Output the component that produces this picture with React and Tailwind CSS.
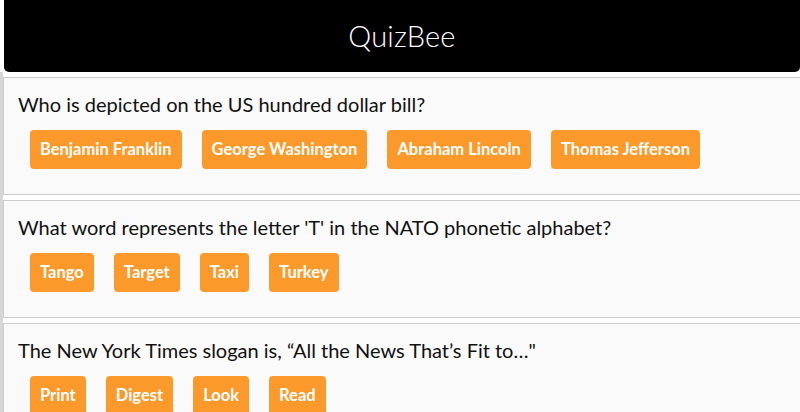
import React from 'react';

const questions = [
  {
    q: 'Who is depicted on the US hundred dollar bill?',
    answers: ['Benjamin Franklin', 'George Washington', 'Abraham Lincoln', 'Thomas Jefferson'],
  },
  {
    q: "What word represents the letter 'T' in the NATO phonetic alphabet?",
    answers: ['Tango', 'Target', 'Taxi', 'Turkey'],
  },
  {
    q: 'The New York Times slogan is, \u201cAll the News That\u2019s Fit to\u2026"',
    answers: ['Print', 'Digest', 'Look', 'Read'],
  },
];

export default function App() {
  return (
    <div className="flex h-[412px] w-[800px] overflow-hidden bg-white font-['Lato','Liberation_Sans',sans-serif]">
      <div className="mt-[72px] w-[3px] shrink-0 bg-[#d6d6d6]" />
      <div className="flex w-[797px] shrink-0 flex-col">
        <header className="ml-px flex h-[72px] shrink-0 items-center justify-center rounded-b-[5px] bg-black">
          <h1 className="text-[29px] font-light tracking-[0.2px] text-white">QuizBee</h1>
        </header>
        <main className="mt-[5px] flex flex-col gap-[5px]">
          {questions.map((item, i) => (
            <section
              key={i}
              className="w-[800px] border-y border-l border-[#cccccc] bg-[#fafafa] pt-3 pb-[25px]"
            >
              <div className="pl-[14px] text-[20px] leading-7 text-[#111]">{item.q}</div>
              <div className="mt-3 flex gap-5 pl-[26px]">
                {item.answers.map(a => (
                  <button
                    key={a}
                    className="h-[39px] rounded-[4px] bg-[#fb9a2a] px-[10px] text-[16.5px] font-bold text-white"
                  >
                    {a}
                  </button>
                ))}
              </div>
            </section>
          ))}
        </main>
      </div>
    </div>
  );
}
